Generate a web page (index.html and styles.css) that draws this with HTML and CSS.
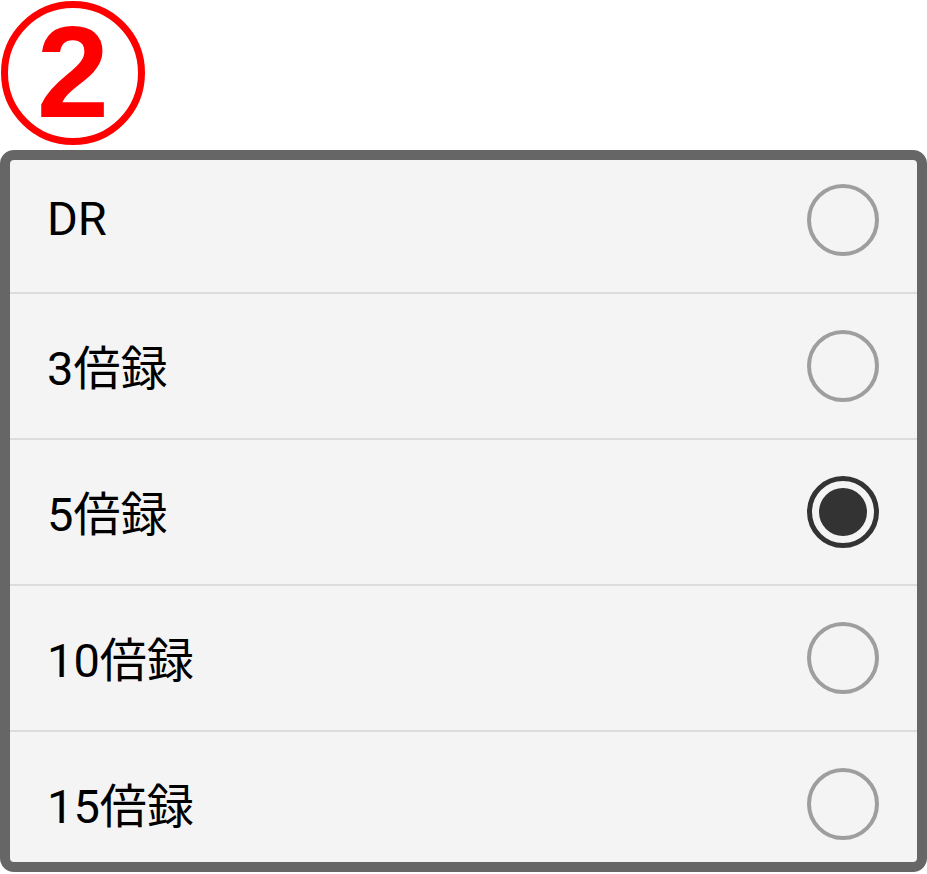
FILE: index.html
```html
<!DOCTYPE html>
<html lang="ja">
<head>
<meta charset="utf-8">
<title>録画モード</title>
<link rel="stylesheet" href="styles.css">
</head>
<body>
<div class="header">
  <div class="step-badge">2</div>
</div>
<div class="panel">
  <div class="list">
    <div class="row"><span class="label">DR</span><span class="radio"></span></div>
    <div class="row"><span class="label">3倍録</span><span class="radio"></span></div>
    <div class="row"><span class="label">5倍録</span><span class="radio checked"><span class="dot"></span></span></div>
    <div class="row"><span class="label">10倍録</span><span class="radio"></span></div>
    <div class="row"><span class="label">15倍録</span><span class="radio"></span></div>
  </div>
</div>
</body>
</html>
```
FILE: styles.css
```css
html, body {
  margin: 0;
  padding: 0;
  background: #ffffff;
}
body {
  width: 927px;
  height: 874px;
  overflow: hidden;
  font-family: Roboto, "Noto Sans CJK JP", sans-serif;
}
.header {
  height: 150px;
  padding: 1px 0 0 1px;
  box-sizing: border-box;
}
.step-badge {
  width: 144px;
  height: 144px;
  box-sizing: border-box;
  border: 7px solid #ff0000;
  border-radius: 50%;
  display: flex;
  align-items: center;
  justify-content: center;
  color: #ff0000;
  font-family: "Liberation Sans", Arial, sans-serif;
  font-weight: bold;
  font-size: 130px;
  line-height: 1;
  padding-bottom: 2px;
}
.panel {
  width: 927px;
  height: 722px;
  box-sizing: border-box;
  border: 10px solid #666666;
  border-radius: 14px;
  background: #f4f4f4;
  overflow: hidden;
}
.list {
  margin-top: -12px;
}
.row {
  height: 144px;
  display: flex;
  align-items: center;
  justify-content: space-between;
  padding: 0 38px 0 37px;
}
.row + .row {
  border-top: 2px solid #dcdcdc;
}
.label {
  font-size: 47px;
  color: #000000;
  padding-bottom: 4px;
}
.radio {
  width: 72px;
  height: 72px;
  box-sizing: border-box;
  border: 4px solid #9e9e9e;
  border-radius: 50%;
  display: flex;
  align-items: center;
  justify-content: center;
}
.radio.checked {
  border: 5px solid #333333;
}
.dot {
  width: 48px;
  height: 48px;
  border-radius: 50%;
  background: #333333;
}
```
